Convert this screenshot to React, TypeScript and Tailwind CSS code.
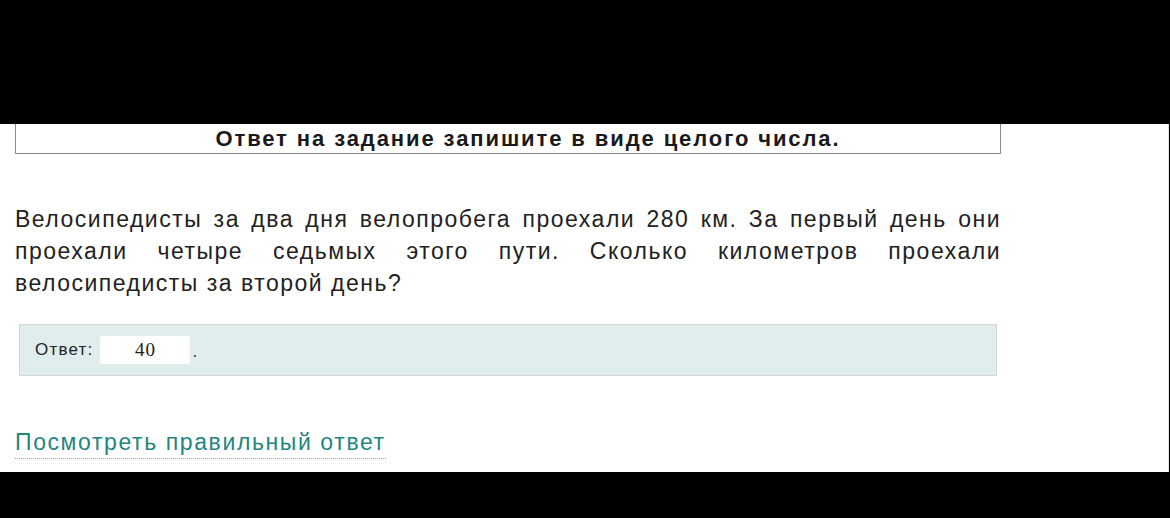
export default function App() {
  return (
    <div className="w-[1170px] h-[518px] bg-black flex flex-col overflow-hidden" style={{ fontFamily: '"Liberation Sans", Arial, sans-serif' }}>
      <div className="h-[124px] shrink-0" />
      {/* Страница задания */}
      <div className="h-[348px] shrink-0 bg-white border-r border-[#e4e4e4] mr-[1px] px-[15px]">
        <div className="w-[986px] h-[30px] pl-[40px] border-x border-b border-[#8a8a8a] flex items-center justify-center">
          <span className="text-[22px] font-bold tracking-[1.9px] text-[#1a1a1a] leading-none mt-[1px]">
            Ответ на задание запишите в виде целого числа.
          </span>
        </div>

        <p className="w-[986px] mt-[49px] text-[23px] tracking-[1.5px] leading-[32px] text-[#222] text-justify">
          Велосипедисты за два дня велопробега проехали 280 км. За первый день они проехали четыре седьмых этого пути. Сколько километров проехали велосипедисты за второй день?
        </p>

        <div className="ml-[4px] w-[978px] h-[52px] mt-[25px] bg-[#dfeeed] border border-[#d2d8d8] flex items-center px-[15px]">
          <span className="text-[17px] tracking-[1.2px] text-[#222]">Ответ:</span>
          <span
            className="ml-[7px] w-[90px] h-[28px] bg-white rounded-[3px] flex items-center justify-center text-[19px] tracking-[1px] text-[#222]"
            style={{ fontFamily: '"Liberation Serif", "Times New Roman", serif' }}
          >
            40
          </span>
          <span className="ml-[2px] text-[17px] text-[#222] mt-[4px]">.</span>
        </div>

        <a className="inline-block mt-[50px] text-[23px] tracking-[1.6px] leading-[32px] text-[#23867f] border-b border-dotted border-[#8aa]">
          Посмотреть правильный ответ
        </a>
      </div>
    </div>
  );
}
